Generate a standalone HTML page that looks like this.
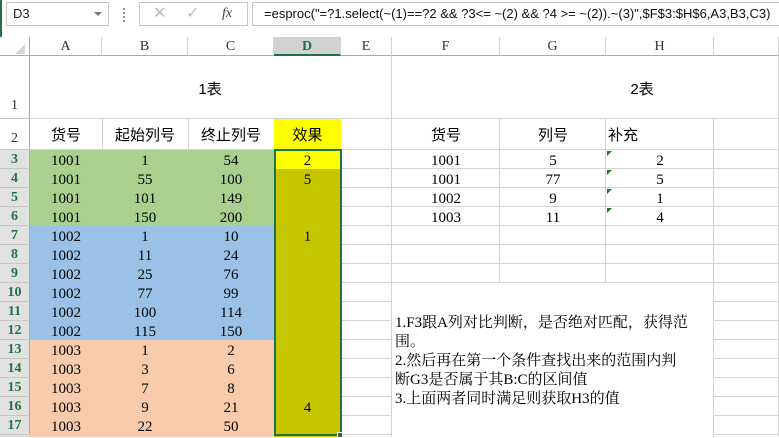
<!DOCTYPE html><html><head><meta charset="utf-8"><style>
body{margin:0;width:779px;height:437px;overflow:hidden;background:#fff;position:relative;font-family:"Liberation Serif","Noto Serif CJK SC",serif;}
div{position:absolute;box-sizing:border-box;}
.c{text-align:center;font-size:15px;line-height:19px;color:#000;font-family:"Liberation Serif",serif;}
.ch{top:37px;height:19px;border-right:1px solid #d4d4d4;border-bottom:1px solid #ababab;background:#fff;text-align:center;font-size:14px;line-height:19px;color:#333;font-family:"Liberation Serif",serif;}
.rh{left:0;width:30px;height:19px;border-bottom:1px solid #c6c6c6;border-right:1px solid #ababab;background:#e1e1e1;color:#217346;font-weight:bold;font-size:14px;line-height:20px;text-align:center;font-family:"Liberation Serif",serif;}
.h{font-family:"Liberation Sans","Noto Sans CJK SC",sans-serif;font-size:15px;text-align:center;}
.gl{background:#d4d4d4;}
.tri{width:0;height:0;border-top:5px solid #1e7a1e;border-right:5px solid transparent;}
</style></head><body>
<div style="left:0;top:0;width:2px;height:437px;background:#217346"></div>
<div style="left:6px;top:2px;width:103px;height:24px;border:1px solid #c6c6c6;font-family:'Liberation Sans',sans-serif;font-size:13px;line-height:22px;padding-left:6px;color:#222">D3</div>
<div style="left:94px;top:12px;border-top:4px solid #777;border-left:4px solid transparent;border-right:4px solid transparent"></div>
<div style="left:123px;top:8px;width:2px;height:14px;border-left:2px dotted #999"></div>
<div style="left:139px;top:2px;width:109px;height:24px;border:1px solid #c6c6c6;font-family:'Liberation Sans',sans-serif;color:#bbb;font-size:16px;line-height:22px"><span style="position:absolute;left:13px">✕</span><span style="position:absolute;left:46px">✓</span><span style="position:absolute;left:82px;color:#444;font-style:italic;font-family:'Liberation Serif',serif;font-size:14px">fx</span></div>
<div style="left:252px;top:2px;width:530px;height:24px;border:1px solid #c6c6c6;font-family:'Liberation Sans',sans-serif;font-size:13px;line-height:22px;padding-left:11px;white-space:nowrap;color:#111">=esproc("=?1.select(~(1)==?2 &amp;&amp; ?3&lt;= ~(2) &amp;&amp; ?4 &gt;= ~(2)).~(3)",$F$3:$H$6,A3,B3,C3)</div>
<div style="left:0;top:37px;width:30px;height:19px;border-right:1px solid #ababab;border-bottom:1px solid #ababab;background:#fff"></div>
<div style="left:15px;top:44px;border-bottom:10px solid #d8d8d8;border-left:10px solid transparent"></div>
<div class="ch" style="left:30px;width:72px">A</div>
<div class="ch" style="left:102px;width:86px">B</div>
<div class="ch" style="left:188px;width:86px">C</div>
<div class="ch" style="left:274px;width:67px;background:#d2d2d2;color:#217346;font-weight:bold;border-bottom:2px solid #217346">D</div>
<div class="ch" style="left:341px;width:51px">E</div>
<div class="ch" style="left:392px;width:108px">F</div>
<div class="ch" style="left:500px;width:106px">G</div>
<div class="ch" style="left:606px;width:108px">H</div>
<div class="ch" style="left:714px;width:65px"></div>
<div class="rh" style="top:56px;height:63px;background:#fff;color:#333;font-weight:normal;line-height:100px">1</div>
<div class="rh" style="top:119px;height:31px;background:#fff;color:#333;font-weight:normal;line-height:40px">2</div>
<div class="rh" style="top:150px">3</div><div class="rh" style="top:169px">4</div><div class="rh" style="top:188px">5</div><div class="rh" style="top:207px">6</div><div class="rh" style="top:226px">7</div><div class="rh" style="top:245px">8</div><div class="rh" style="top:264px">9</div><div class="rh" style="top:283px">10</div><div class="rh" style="top:302px">11</div><div class="rh" style="top:321px">12</div><div class="rh" style="top:340px">13</div><div class="rh" style="top:359px">14</div><div class="rh" style="top:378px">15</div><div class="rh" style="top:397px">16</div><div class="rh" style="top:416px">17</div>
<div style="left:0;top:435px;width:30px;height:2px;background:#e1e1e1"></div>
<div class="gl" style="left:30px;top:118px;width:749px;height:1px"></div>
<div class="gl" style="left:30px;top:149px;width:749px;height:1px"></div>
<div class="gl" style="left:102px;top:119px;width:1px;height:31px"></div>
<div class="gl" style="left:188px;top:119px;width:1px;height:31px"></div>
<div class="gl" style="left:391px;top:56px;width:1px;height:381px"></div>
<div class="gl" style="left:340px;top:119px;width:1px;height:318px"></div>
<div class="gl" style="left:499px;top:119px;width:1px;height:164px"></div>
<div class="gl" style="left:605px;top:119px;width:1px;height:164px"></div>
<div class="gl" style="left:713px;top:119px;width:1px;height:318px"></div>
<div class="gl" style="left:778px;top:56px;width:1px;height:381px"></div>
<div class="gl" style="left:341px;top:168px;width:438px;height:1px"></div>
<div class="gl" style="left:341px;top:187px;width:438px;height:1px"></div>
<div class="gl" style="left:341px;top:206px;width:438px;height:1px"></div>
<div class="gl" style="left:341px;top:225px;width:438px;height:1px"></div>
<div class="gl" style="left:341px;top:244px;width:438px;height:1px"></div>
<div class="gl" style="left:341px;top:263px;width:438px;height:1px"></div>
<div class="gl" style="left:341px;top:282px;width:438px;height:1px"></div>
<div class="gl" style="left:341px;top:301px;width:51px;height:1px"></div><div class="gl" style="left:714px;top:301px;width:65px;height:1px"></div>
<div class="gl" style="left:341px;top:320px;width:51px;height:1px"></div><div class="gl" style="left:714px;top:320px;width:65px;height:1px"></div>
<div class="gl" style="left:341px;top:339px;width:51px;height:1px"></div><div class="gl" style="left:714px;top:339px;width:65px;height:1px"></div>
<div class="gl" style="left:341px;top:358px;width:51px;height:1px"></div><div class="gl" style="left:714px;top:358px;width:65px;height:1px"></div>
<div class="gl" style="left:341px;top:377px;width:51px;height:1px"></div><div class="gl" style="left:714px;top:377px;width:65px;height:1px"></div>
<div class="gl" style="left:341px;top:396px;width:51px;height:1px"></div><div class="gl" style="left:714px;top:396px;width:65px;height:1px"></div>
<div class="gl" style="left:341px;top:415px;width:51px;height:1px"></div><div class="gl" style="left:714px;top:415px;width:65px;height:1px"></div>
<div class="gl" style="left:341px;top:434px;width:51px;height:1px"></div><div class="gl" style="left:714px;top:434px;width:65px;height:1px"></div>
<div class="h" style="left:190px;top:78px;width:40px">1表</div>
<div class="h" style="left:622px;top:78px;width:40px">2表</div>
<div class="h" style="left:30px;top:124px;width:72px">货号</div>
<div class="h" style="left:102px;top:124px;width:86px">起始列号</div>
<div class="h" style="left:188px;top:124px;width:86px">终止列号</div>
<div class="h" style="left:274px;top:119px;width:67px;height:31px;background:#ffff00;line-height:31px;padding-top:1px">效果</div>
<div class="h" style="left:392px;top:124px;width:108px">货号</div>
<div class="h" style="left:500px;top:124px;width:106px">列号</div>
<div class="h" style="left:608px;top:124px;text-align:left">补充</div>
<div style="left:30px;top:150px;width:244px;height:76px;background:#a9d08e"></div>
<div style="left:30px;top:226px;width:244px;height:114px;background:#9bc2e6"></div>
<div style="left:30px;top:340px;width:244px;height:97px;background:#f8cbad"></div>
<div style="left:274px;top:150px;width:67px;height:287px;background:#c6c600"></div>
<div style="left:274px;top:150px;width:67px;height:19px;background:#ffff00"></div>
<div style="left:274px;top:149px;width:68px;height:287px;border:2px solid #217346"></div>
<div style="left:337px;top:432px;width:6px;height:6px;background:#217346;border:1px solid #fff"></div>
<div class="c" style="left:30px;top:152px;width:72px">1001<br>1001<br>1001<br>1001<br>1002<br>1002<br>1002<br>1002<br>1002<br>1002<br>1003<br>1003<br>1003<br>1003<br>1003</div>
<div class="c" style="left:102px;top:152px;width:86px">1<br>55<br>101<br>150<br>1<br>11<br>25<br>77<br>100<br>115<br>1<br>3<br>7<br>9<br>22</div>
<div class="c" style="left:188px;top:152px;width:86px">54<br>100<br>149<br>200<br>10<br>24<br>76<br>99<br>114<br>150<br>2<br>6<br>8<br>21<br>50</div>
<div class="c" style="left:274px;top:152px;width:67px">2</div>
<div class="c" style="left:274px;top:171px;width:67px">5</div>
<div class="c" style="left:274px;top:228px;width:67px">1</div>
<div class="c" style="left:274px;top:399px;width:67px">4</div>
<div class="c" style="left:392px;top:152px;width:108px">1001<br>1001<br>1002<br>1003</div>
<div class="c" style="left:500px;top:152px;width:106px">5<br>77<br>9<br>11</div>
<div class="c" style="left:606px;top:152px;width:108px">2<br>5<br>1<br>4</div>
<div class="tri" style="left:607px;top:151px"></div><div class="tri" style="left:607px;top:170px"></div><div class="tri" style="left:607px;top:189px"></div><div class="tri" style="left:607px;top:208px"></div>
<div style="left:395px;top:314px;width:320px;font-size:15px;line-height:19px;font-family:'Liberation Serif','Noto Serif CJK SC',serif;white-space:nowrap">1.F3跟A列对比判断，是否绝对匹配，获得范<br>围。<br>2.然后再在第一个条件查找出来的范围内判<br>断G3是否属于其B:C的区间值<br>3.上面两者同时满足则获取H3的值</div>
</body></html>
